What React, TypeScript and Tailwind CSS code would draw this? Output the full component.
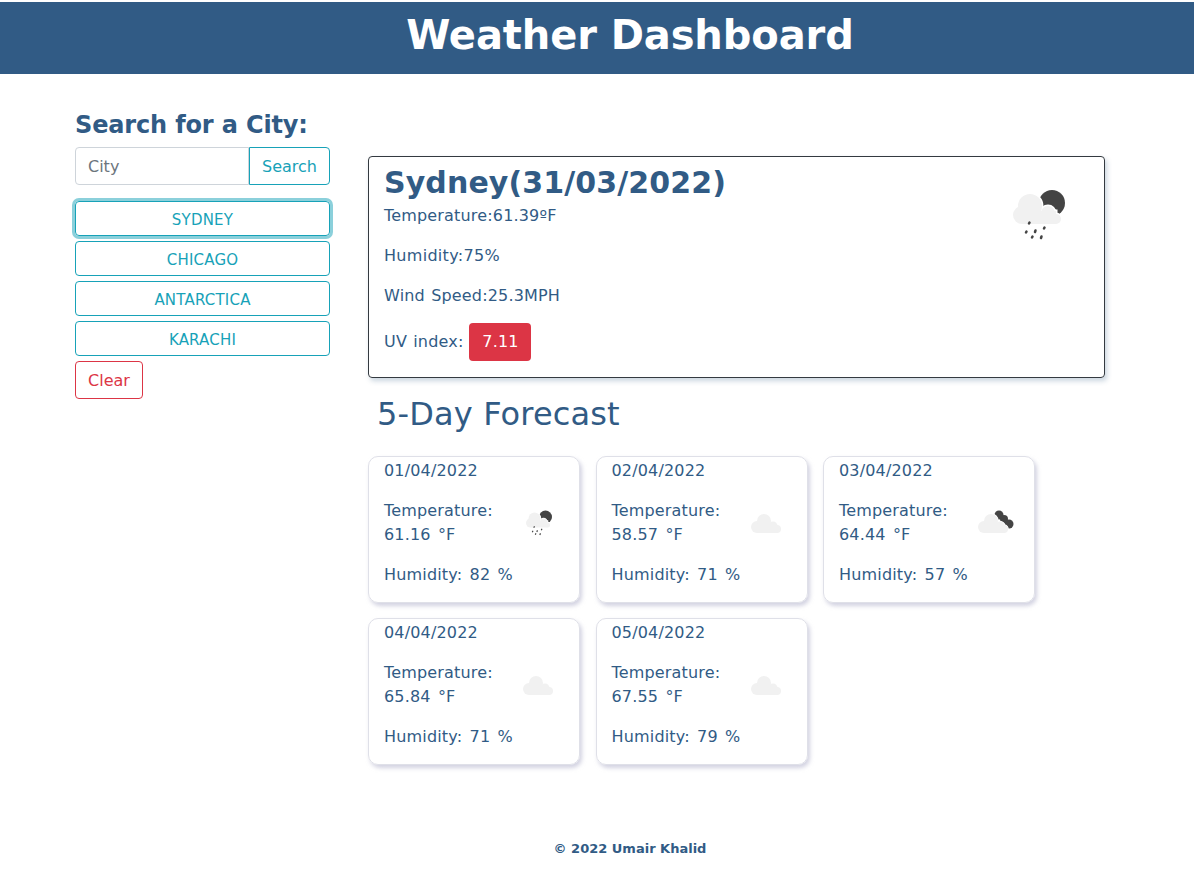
const forecast = [
  { date: '01/04/2022', temp: '61.16', humidity: '82', icon: 'rain' },
  { date: '02/04/2022', temp: '58.57', humidity: '71', icon: 'cloud' },
  { date: '03/04/2022', temp: '64.44', humidity: '57', icon: 'broken' },
  { date: '04/04/2022', temp: '65.84', humidity: '71', icon: 'cloud' },
  { date: '05/04/2022', temp: '67.55', humidity: '79', icon: 'cloud' },
]

// rain icon, drawn on a 70 x 70 box
function RainIcon({ className }: { className: string }) {
  const shapes = (
    <>
      <circle cx="17" cy="42" r="9" />
      <circle cx="25" cy="33" r="12" />
      <circle cx="43" cy="40" r="7" />
      <circle cx="51" cy="46" r="5" />
      <rect x="17" y="38" width="34" height="13" />
    </>
  )
  return (
    <svg viewBox="0 0 70 70" className={className}>
      <circle cx="47" cy="30" r="13" fill="#444" />
      <g fill="#fff" stroke="#fff" strokeWidth="3">{shapes}</g>
      <g fill="#f1f1f1">{shapes}</g>
      <g stroke="#444" strokeWidth="2.500" strokeLinecap="round">
        <path d="M24.500 49.500 l-0.500 1" />
        <path d="M21.500 58.500 l-0.500 1" />
        <path d="M30.500 57.500 l-0.500 1.500" />
        <path d="M39.500 54.500 l-0.500 1" />
        <path d="M27.500 63.500 l-0.500 1" />
        <path d="M36.500 63.500 l-0.500 1.500" />
      </g>
    </svg>
  )
}

// plain and broken clouds, drawn on a 40 x 40 box
function CloudIcon({ broken, className }: { broken?: boolean; className: string }) {
  const shapes = (
    <>
      <circle cx="10" cy="26" r="6" />
      <circle cx="17" cy="20" r="7" />
      <circle cx="26" cy="25" r="4.500" />
      <circle cx="30" cy="28" r="4" />
      <rect x="10" y="25" width="20" height="7" />
    </>
  )
  return (
    <svg viewBox="0 0 40 40" className={className}>
      {broken && (
        <g fill="#444">
          <circle cx="25" cy="14" r="4.500" />
          <circle cx="30" cy="18" r="4" />
          <circle cx="35" cy="23" r="4.500" />
        </g>
      )}
      {broken && <g fill="#fff" stroke="#fff" strokeWidth="1.500">{shapes}</g>}
      <g fill="#f1f1f1">{shapes}</g>
    </svg>
  )
}

export default function App() {
  return (
    <div className="w-[1194px] min-h-[894px] bg-white pt-[2px] text-[#315b85] font-['DejaVu_Sans',Verdana,sans-serif] text-base leading-6">
      <header className="h-[72px] bg-[#315b85] text-white text-center">
        <h1 className="pl-[66px] text-[40px] leading-[66px] font-bold tracking-[-0.1px]">Weather Dashboard</h1>
      </header>

      <div className="flex pl-[75px] pt-[33px]">
        {/* Sidebar */}
        <aside className="w-[255px] shrink-0">
          <h2 className="text-[24px] leading-[36px] font-bold tracking-[-0.15px]">Search for a City:</h2>
          <div className="flex h-[38px] mt-[4px]">
            <input
              placeholder="City"
              className="min-w-0 flex-1 px-3 pt-[1px] border border-[#ced4da] rounded-l text-base text-[#495057] placeholder-[#6c757d]"
            />
            <button className="px-3 pt-[1px] border border-[#17a2b8] rounded-r text-[#17a2b8]">Search</button>
          </div>
          <div className="flex flex-col gap-[5px] mt-[16px]">
            <button className="h-[35px] pt-[2px] border border-[#17a2b8] rounded text-[15px] tracking-[0.2px] text-[#17a2b8] shadow-[0_0_0_3px_rgba(23,162,184,0.5)]">SYDNEY</button>
            <button className="h-[35px] pt-[2px] border border-[#17a2b8] rounded text-[15px] tracking-[0.2px] text-[#17a2b8]">CHICAGO</button>
            <button className="h-[35px] pt-[2px] border border-[#17a2b8] rounded text-[15px] tracking-[0.2px] text-[#17a2b8]">ANTARCTICA</button>
            <button className="h-[35px] pt-[2px] border border-[#17a2b8] rounded text-[15px] tracking-[0.2px] text-[#17a2b8]">KARACHI</button>
            <button className="w-[68px] h-[38px] pt-[1px] border border-[#dc3545] rounded text-[#dc3545]">Clear</button>
          </div>
        </aside>

        {/* Main */}
        <main className="w-[737px] ml-[38px] pt-[49px]">
          <section className="relative h-[222px] border border-[#343a40] rounded px-[15px] tracking-[0.17px] [word-spacing:1px] shadow-[2px_3px_5px_rgba(49,91,133,0.25)]">
            <h2 className="mt-[8px] text-[30px] leading-[36px] font-bold tracking-[0.1px]">Sydney(31/03/2022)</h2>
            <p className="mt-[3px] mb-[16px]">Temperature:61.39ºF</p>
            <p className="mb-[16px] tracking-[0.3px]">Humidity:75%</p>
            <p className="mb-[16px]">Wind Speed:25.3MPH</p>
            <p className="flex items-center gap-[6px] -mt-[1px]">
              UV index:
              <span className="flex h-[38px] w-[62px] items-center justify-center rounded bg-[#dc3545] text-white">7.11</span>
            </p>
            <RainIcon className="absolute left-[636px] top-[16px] w-[70px] h-[70px]" />
          </section>

          <h2 className="mt-[16px] pl-[9px] text-[32px] leading-[40px] tracking-[0.15px]">5-Day Forecast</h2>

          <div className="grid grid-cols-[repeat(3,212px)] gap-x-[15.500px] gap-y-[15px] mt-[22px]">
            {forecast.map((day) => (
              <div
                key={day.date}
                className="relative h-[147px] border border-[#dfe0e8] rounded-[10px] px-[15px] tracking-[0.17px] [word-spacing:2px] shadow-[2px_3px_4px_rgba(180,180,205,0.6)]"
              >
                <p className="mt-[2px]">{day.date}</p>
                <p className="mt-[16px]">
                  Temperature:
                  <br />
                  {day.temp} °F
                </p>
                <p className="mt-[16px]">Humidity: {day.humidity} %</p>
                {day.icon === 'rain' ? (
                  <RainIcon className="absolute left-[153px] top-[45px] w-[35px] h-[35px]" />
                ) : (
                  <CloudIcon broken={day.icon === 'broken'} className="absolute left-[150px] top-[44px] w-[40px] h-[40px]" />
                )}
              </div>
            ))}
          </div>
        </main>
      </div>

      <footer className="mt-[74px] pl-[66px] text-center text-[13px] leading-5 font-bold">© 2022 Umair Khalid</footer>
    </div>
  )
}
